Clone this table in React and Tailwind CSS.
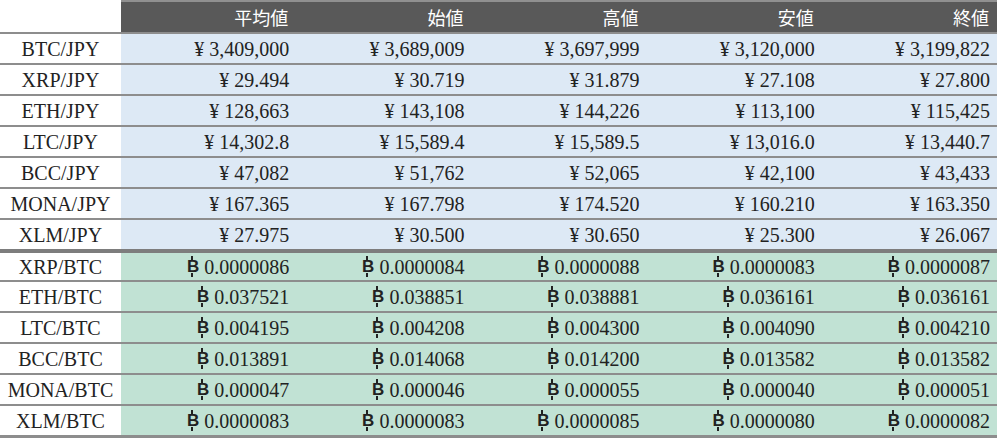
const headers = ['平均値', '始値', '高値', '安値', '終値'];

const jpyRows = [
  ['BTC/JPY', '3,409,000', '3,689,009', '3,697,999', '3,120,000', '3,199,822'],
  ['XRP/JPY', '29.494', '30.719', '31.879', '27.108', '27.800'],
  ['ETH/JPY', '128,663', '143,108', '144,226', '113,100', '115,425'],
  ['LTC/JPY', '14,302.8', '15,589.4', '15,589.5', '13,016.0', '13,440.7'],
  ['BCC/JPY', '47,082', '51,762', '52,065', '42,100', '43,433'],
  ['MONA/JPY', '167.365', '167.798', '174.520', '160.210', '163.350'],
  ['XLM/JPY', '27.975', '30.500', '30.650', '25.300', '26.067'],
];

const btcRows = [
  ['XRP/BTC', '0.0000086', '0.0000084', '0.0000088', '0.0000083', '0.0000087'],
  ['ETH/BTC', '0.037521', '0.038851', '0.038881', '0.036161', '0.036161'],
  ['LTC/BTC', '0.004195', '0.004208', '0.004300', '0.004090', '0.004210'],
  ['BCC/BTC', '0.013891', '0.014068', '0.014200', '0.013582', '0.013582'],
  ['MONA/BTC', '0.000047', '0.000046', '0.000055', '0.000040', '0.000051'],
  ['XLM/BTC', '0.0000083', '0.0000083', '0.0000085', '0.0000080', '0.0000082'],
];

// bold B with small ticks above and below, like the baht/bitcoin sign
function BtcSign() {
  return (
    <span className="relative inline-block mr-[5px] font-[family-name:Liberation_Sans,sans-serif] font-bold text-[17px]">
      B
      <span className="absolute left-[4px] top-[-2px] w-[2px] h-[4px] bg-[#222]" />
      <span className="absolute left-[4px] bottom-[-2px] w-[2px] h-[4px] bg-[#222]" />
    </span>
  );
}

function Row({ row, kind, first }) {
  const [pair, ...vals] = row;
  const cellBg = kind === 'jpy' ? 'bg-[#dde9f5]' : 'bg-[#c1e2d4]';
  const border = first ? 'border-t-4 border-[#7d7d7d]' : 'border-t-2 border-[#8d8d8d]';
  return (
    <div className={`grid grid-cols-[121px_repeat(5,1fr)] h-[31px] ${border}`}>
      <div className="flex items-center justify-center bg-white">{pair}</div>
      {vals.map((v, i) => (
        <div key={i} className={`flex items-center justify-end pr-[7px] ${cellBg}`}>
          {kind === 'jpy' ? (
            <span>¥ {v}</span>
          ) : (
            <span className="flex items-center">
              <BtcSign />
              {v}
            </span>
          )}
        </div>
      ))}
    </div>
  );
}

export default function App() {
  return (
    <div className="w-[997px] h-[441px] bg-white font-[family-name:Liberation_Serif,Noto_Sans_CJK_JP,serif] text-[20px] text-[#222] leading-none">
      <div className="grid grid-cols-[121px_repeat(5,1fr)] h-[32px]">
        <div className="bg-white" />
        {headers.map((h) => (
          <div
            key={h}
            className="flex items-center justify-end pr-[8px] bg-[#595959] border-t-2 border-[#909090] text-white text-[18px] font-[family-name:Noto_Sans_CJK_JP,sans-serif]"
          >
            {h}
          </div>
        ))}
      </div>
      {jpyRows.map((r) => (
        <Row key={r[0]} row={r} kind="jpy" />
      ))}
      {btcRows.map((r, i) => (
        <Row key={r[0]} row={r} kind="btc" first={i === 0} />
      ))}
      <div className="border-t-[3px] border-[#8d8d8d]" />
    </div>
  );
}
